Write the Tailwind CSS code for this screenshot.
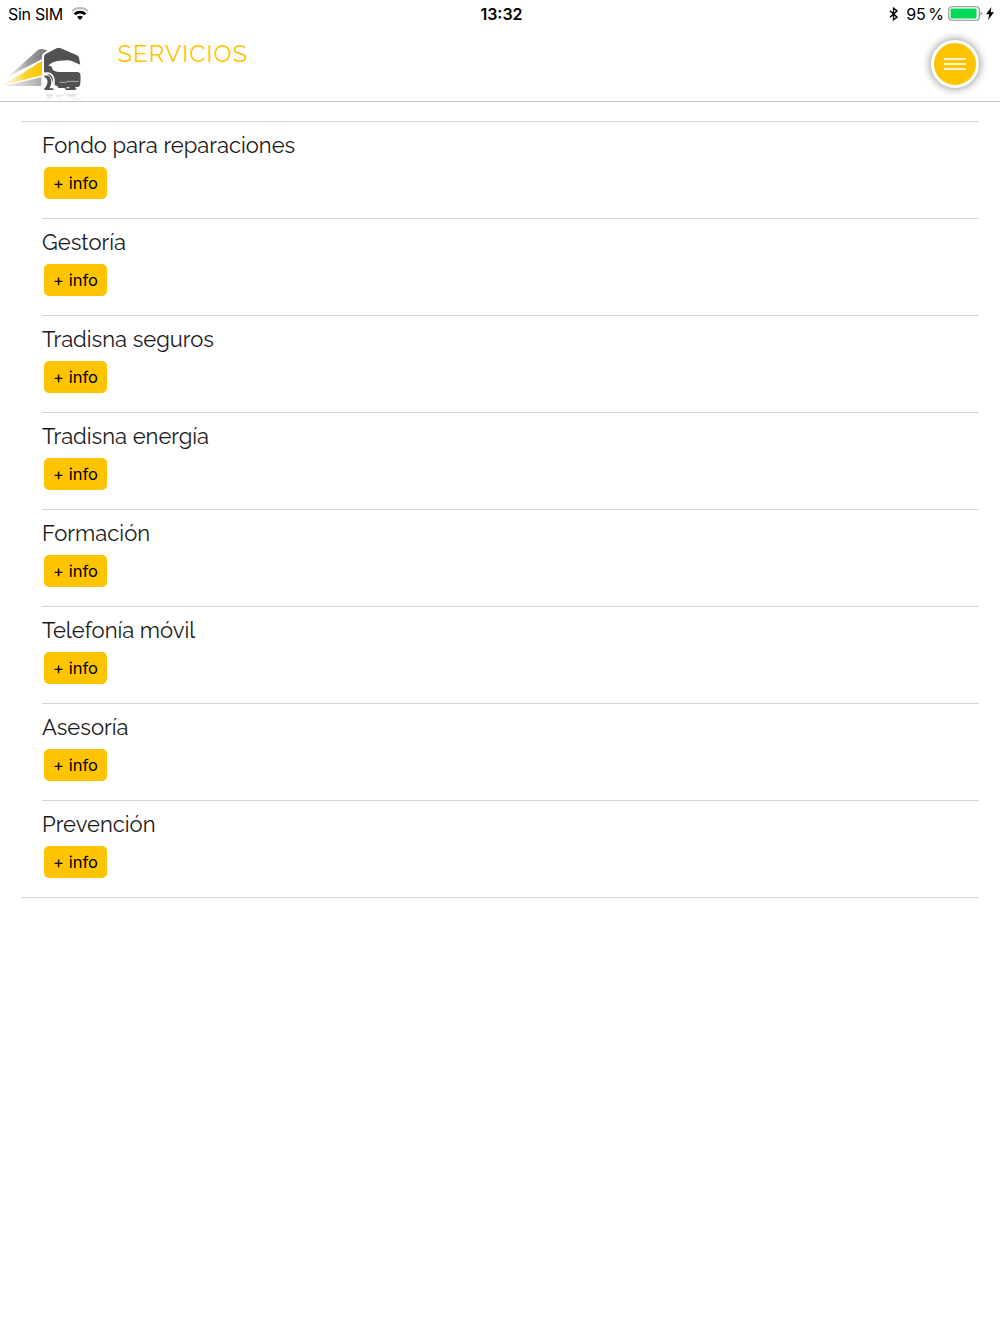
<!DOCTYPE html>
<html lang="es">
<head>
  <meta charset="UTF-8">
  <meta name="viewport" content="width=device-width, initial-scale=1.0">
  <title>Servicios</title>
  <script src="https://cdn.jsdelivr.net/npm/@tailwindcss/browser@4"></script>
</head>
<body class="bg-white text-black min-h-screen font-['Inter',sans-serif]">

  <!-- status bar -->
  <div class="h-7 grid grid-cols-3 items-center pl-2 pr-[6px] text-base leading-7">
    <div class="flex items-center gap-[8px] -mt-[1px]">
      <span class="tracking-[-0.3px]">Sin SIM</span>
      <svg class="w-[18px] h-[13px]" viewBox="0 0 18 13" fill="none">
        <path d="M1 4.200C5.500-.2 12.500-.2 17 4.200" stroke="#bdbdbd" stroke-width="2"/>
        <path d="M3.700 7.200c3-2.800 7.600-2.800 10.600 0" stroke="#000" stroke-width="2.800"/>
        <path d="M6 9.900c1.700-1.500 4.300-1.500 6 0l-3 3z" fill="#000"/>
      </svg>
    </div>
    <div class="text-center font-semibold pl-[1px] -mt-[1px]">13:32</div>
    <div class="flex items-center justify-end -mt-[1px]">
      <svg class="w-[9px] h-[14px] mr-[8px]" viewBox="0 0 10 15" fill="none" stroke="#000" stroke-width="1.500">
        <path d="M1 4l8 7-4 3V1l4 3-8 7"/>
      </svg>
      <span class="mr-[4px] [word-spacing:-2px]">95 %</span>
      <svg class="w-[35px] h-[15px] mr-[3px]" viewBox="0 0 35 15">
        <rect x=".7" y=".7" width="30.600" height="13.600" rx="3" fill="none" stroke="#8e8e8e" stroke-width="1.100"/>
        <rect x="2.500" y="2.500" width="26" height="10" rx="1" fill="#04d957"/>
        <path d="M32.500 5.200q3 2.300 0 4.600z" fill="#8e8e8e"/>
      </svg>
      <svg class="w-[8px] h-[13px]" viewBox="0 0 8 13">
        <path d="M5.500 0L0 7.300h3.300L2 13l6-7.800H4.500z"/>
      </svg>
    </div>
  </div>

  <header class="h-[74px] flex items-start justify-between border-b border-[#c4c4c4] pt-[2px] pr-[21px]">
    <div class="flex">
      <svg class="w-[100px] h-[71px]" viewBox="0 0 300 213">
        <defs>
          <linearGradient id="grayBeam" x1="0" x2="1">
            <stop offset="0" stop-color="#d8d8d8" stop-opacity=".4"/>
            <stop offset=".5" stop-color="#a2a2a2"/>
            <stop offset="1" stop-color="#747474"/>
          </linearGradient>
          <linearGradient id="yellowBeam" x1="0" x2="1">
            <stop offset="0" stop-color="#fff0a8" stop-opacity=".3"/>
            <stop offset=".6" stop-color="#fbd12d"/>
            <stop offset="1" stop-color="#fcc600"/>
          </linearGradient>
          <linearGradient id="lowBeam" x1="0" x2="1">
            <stop offset="0" stop-color="#ddd" stop-opacity=".5"/>
            <stop offset="1" stop-color="#a9a9a9"/>
          </linearGradient>
          <linearGradient id="shade" x1="0" y1="0" x2="0" y2="1">
            <stop offset="0" stop-color="#e0e0e0"/>
            <stop offset="1" stop-color="#fff"/>
          </linearGradient>
        </defs>
        <!-- light beams -->
        <path d="M22 142L113 61q6-5 13-4l17 4-11 7q-6 4-6 10v9z" fill="url(#grayBeam)"/>
        <path d="M8 166L126 93v43z" fill="url(#yellowBeam)"/>
        <path d="M12 168l112-26v26z" fill="url(#lowBeam)"/>
        <!-- cab -->
        <path d="M132 128V80q0-6 6-9l32-16q6-3 12 0l49 21q5 2 6 7l4 21-24-10q-9-4-18-3l-26 2q-18 3-26 13l-5 6v13q-4 3-10 3z" fill="#515151"/>
        <path d="M137 108h15q3 0 4 5 1 8 8 10 7 3 14 3h54q7 0 9 6 2 12 0 28-1 11-8 11h-29l-6 3h-22l-4-6q-10-1-13-9-4-20-18-27h-4z" fill="#515151"/>
        <path d="M132 131q26-7 30 20 2 11-5 22" fill="none" stroke="#fff" stroke-width="5"/>
        <path d="M179 157h18l5-3h34" fill="none" stroke="#e0e0e0" stroke-width="2"/>
        <!-- wheels -->
        <path d="M133 137q14-3 19 9 5 15-4 29h12v5h-27v-4q12-12 9-25-2-9-9-10zM193 175h13l3-4h19l-4 4h7l-5 5h-28z" fill="#515151"/>
        <!-- reflection -->
        <path d="M136 192h24l-5 21h-12zM164 194h28l-9 8h-13zM194 192h38l-8 9h-15zM213 203h30l6 10h-28z" fill="url(#shade)"/>
      </svg>
      <h1 class="pl-[17.500px] pt-[8px] text-2xl leading-8 text-[#fdc300] font-['Raleway','Lato',sans-serif] tracking-[1px]">SERVICIOS</h1>
    </div>
    <button class="mt-[10px] size-12 rounded-full border-3 border-white bg-[#ffc400] shadow-[0_0_9px_1px_rgba(0,0,0,0.4)] flex flex-col items-center justify-center gap-[3px]" aria-label="Menú">
      <span class="w-[22px] h-[2px] bg-[#fff3c8]"></span>
      <span class="w-[22px] h-[2px] bg-[#fff3c8]"></span>
      <span class="w-[22px] h-[2px] bg-[#fff3c8]"></span>
    </button>
  </header>

  <main class="px-[21px] pt-[19px]">
    <ul id="services" class="border-y border-[#d5d5d5]"></ul>
  </main>

  <script>
    const services = [
      'Fondo para reparaciones',
      'Gestoría',
      'Tradisna seguros',
      'Tradisna energía',
      'Formación',
      'Telefonía móvil',
      'Asesoría',
      'Prevención'
    ]

    document.querySelector('#services').innerHTML = services.map((name, i) => `
      <li class="ml-[21px] ${i ? 'h-[97px] border-t border-[#d5d5d5]' : 'h-24'}">
        <h2 class="pt-[7px] text-[22px] leading-8 text-[#1a1a1a] font-['Raleway','Lato',sans-serif]">${name}</h2>
        <button class="block ml-[2px] mt-[6px] w-[63px] h-8 rounded-[5px] bg-[#ffc400] text-[16.500px]">+ info</button>
      </li>
    `).join('')
  </script>
</body>
</html>
